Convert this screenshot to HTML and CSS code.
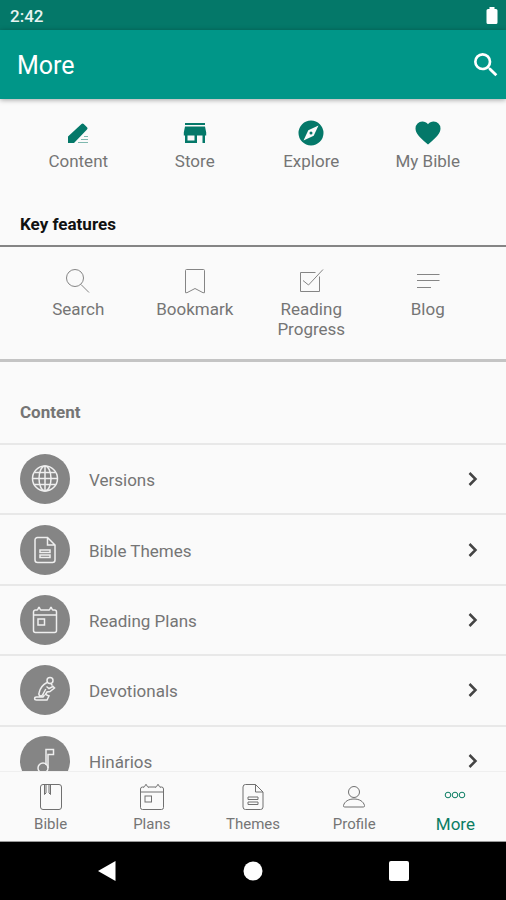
FILE: index.html
```html
<!DOCTYPE html>
<html lang="en">
<head>
<meta charset="utf-8">
<meta name="viewport" content="width=device-width, initial-scale=1">
<title>More</title>
<link rel="stylesheet" href="styles.css">
</head>
<body>
<svg class="defs" aria-hidden="true">
  <symbol id="calendar" viewBox="0 0 26 28">
    <path d="M5 4H3.500a2 2 0 0 0-2 2v18.500a2 2 0 0 0 2 2h19a2 2 0 0 0 2-2V6a2 2 0 0 0-2-2H21M9 4h8M1.500 9h23M4.500 4.500l1.200-1 1-2h.6l1 2 1.200 1M16.500 4.500l1.200-1 1-2h.6l1 2 1.200 1"/>
    <rect x="6" y="13" width="6.500" height="6"/>
  </symbol>
  <symbol id="document" viewBox="0 0 26 28">
    <path d="M15.500 1.500h-10a2.500 2.500 0 0 0-2.500 2.500v20a2.500 2.500 0 0 0 2.500 2.500h15a2.500 2.500 0 0 0 2.500-2.500V9zM15.500 1.500V9H23"/>
    <path d="M8 14h10v2.500H8zM8 19h10v2.500H8z"/>
  </symbol>
  <symbol id="chevron" viewBox="0 0 12 16">
    <path d="M2.500 2l6 6-6 6"/>
  </symbol>
</svg>
<div class="screen">
  <div class="status">
    <span>2:42</span>
    <svg class="battery" viewBox="0 0 12 18"><path d="M3.500 0h5v2H10a1.500 1.500 0 0 1 1.500 1.500v12A1.500 1.500 0 0 1 10 17H2a1.500 1.500 0 0 1-1.500-1.500v-12A1.500 1.500 0 0 1 2 2h1.500z"/></svg>
  </div>
  <header class="appbar">
    <h1>More</h1>
    <button type="button" class="find" aria-label="Search">
      <svg viewBox="3 3 18 18"><path d="M15.500 14h-.79l-.28-.27A6.470 6.470 0 0 0 16 9.500 6.500 6.500 0 1 0 9.500 16c1.610 0 3.090-.59 4.230-1.570l.27.28v.79l5 4.990L20.490 19zm-6 0a4.500 4.500 0 1 1 0-9 4.500 4.500 0 0 1 0 9z"/></svg>
    </button>
  </header>
  <main class="content">
    <nav class="tiles shortcuts">
      <a href="#content"><svg viewBox="0 0 28 28"><path d="M4 24v-6.500L17.500 5a1.500 1.500 0 0 1 2.200 0l3.300 3.300a1.500 1.500 0 0 1 0 2.200L10 24z"/><path class="hair" d="M14 23.500h10M17 20.500h7M20 17.500h4"/></svg>Content</a>
      <a href="#store"><svg viewBox="0 0 28 28"><path fill-rule="evenodd" d="M4 4h20v2H4zM4 7.500h20l1.200 6v3H24V24h-2.500v-7.500H16V24H4v-7.500H2.800v-3zM6.500 16.500v5h7v-5z"/></svg>Store</a>
      <a href="#explore"><svg viewBox="0 0 28 28"><path fill-rule="evenodd" d="M14 1.500a12.500 12.500 0 1 0 0 25 12.500 12.500 0 0 0 0-25zM6.500 21.500l4.800-10.200 10.200-4.800-4.800 10.200zM14 12.500a1.500 1.500 0 1 1 0 3 1.500 1.500 0 0 1 0-3z"/></svg>Explore</a>
      <a href="#my-bible"><svg viewBox="0 0 28 28"><path d="M14 25.500l-1.800-1.600C5.800 18.100 1.500 14.200 1.500 9.400A6.800 6.800 0 0 1 8.400 2.600c2.200 0 4.300 1 5.600 2.600 1.300-1.600 3.400-2.600 5.600-2.600a6.800 6.800 0 0 1 6.900 6.800c0 4.800-4.300 8.700-10.700 14.500z"/></svg>My Bible</a>
    </nav>
    <section class="features">
      <h2>Key features</h2>
      <nav class="tiles outlined">
        <a href="#search"><svg viewBox="0 0 28 28"><circle cx="11" cy="11" r="8.500"/><path d="M17 17.500l8 8"/></svg>Search</a>
        <a href="#bookmark"><svg viewBox="0 0 28 28"><path d="M4.500 3.500q0-1 1-1h17q1 0 1 1v22.200h-1.500L14 21.500l-8 4.200H4.500z"/></svg>Bookmark</a>
        <a href="#progress"><svg viewBox="0 0 28 28"><path d="M18.500 5.500H3.500v19h19V9.500M6 13.500l5.500 4.500L26 2.500"/></svg>Reading Progress</a>
        <a href="#blog"><svg viewBox="0 0 28 28"><path d="M3 7.500h22.500M3 13.500h22.500M3 20.500h14"/></svg>Blog</a>
      </nav>
    </section>
    <section class="library">
      <h2>Content</h2>
      <ul>
        <li><a href="#versions"><span class="disc"><svg viewBox="0 0 28 28"><circle cx="14" cy="13.500" r="12.500"/><ellipse cx="14" cy="13.500" rx="6" ry="12.500"/><path d="M14 1v25M1.500 13.500h25M3.500 7.500h21M3.500 19.500h21"/></svg></span><span class="name">Versions</span><svg class="go"><use href="#chevron"/></svg></a></li>
        <li><a href="#themes"><span class="disc"><svg><use href="#document"/></svg></span><span class="name">Bible Themes</span><svg class="go"><use href="#chevron"/></svg></a></li>
        <li><a href="#plans"><span class="disc"><svg><use href="#calendar"/></svg></span><span class="name">Reading Plans</span><svg class="go"><use href="#chevron"/></svg></a></li>
        <li><a href="#devotionals"><span class="disc"><svg viewBox="0 0 28 28"><circle cx="19" cy="4.500" r="3"/><path d="M16 6.500c-4 2-7 6-8 10.500-.8 3 2.500 4 3.800 1.500l3-5.500M15.500 10.500l2.500 2 4-2 1.500 1.500-4.500 3.500-3 .500-1.500 2.500 3.500 1.500-2 4H5.500c-2.500 0-2.500-3 0-3h6.500l1.500-2M20 8l1.500 1.500"/></svg></span><span class="name">Devotionals</span><svg class="go"><use href="#chevron"/></svg></a></li>
        <li><a href="#hinarios"><span class="disc"><svg viewBox="0 0 28 28"><path d="M15 18V2.500h7.500V7.500H17V21"/><circle cx="12" cy="21" r="5"/></svg></span><span class="name">Hinários</span><svg class="go"><use href="#chevron"/></svg></a></li>
      </ul>
    </section>
  </main>
  <nav class="tabs">
    <a href="#bible"><svg viewBox="0 0 26 28"><rect x="2.500" y="1.500" width="21" height="25" rx="2.500"/><path d="M6.500 1.500V11.500l1.500-1.500V1.500M12.500 1.500V11.500L11 10V1.500"/></svg>Bible</a>
    <a href="#plans"><svg><use href="#calendar"/></svg>Plans</a>
    <a href="#themes"><svg><use href="#document"/></svg>Themes</a>
    <a href="#profile"><svg viewBox="0 0 26 28"><circle cx="13" cy="9" r="5.500"/><path d="M2.500 22.500c1-4 5-6.500 10.500-6.500s9.500 2.500 10.500 6.500q.3 1.500-1.200 1.500H3.700q-1.500 0-1.200-1.500z"/></svg>Profile</a>
    <a href="#more" class="active" aria-current="page"><svg viewBox="0 0 26 28"><circle cx="6" cy="12" r="2.800"/><circle cx="13" cy="12" r="2.800"/><circle cx="20" cy="12" r="2.800"/></svg>More</a>
  </nav>
  <div class="system">
    <button type="button" aria-label="Back"><svg viewBox="0 0 22 22"><path d="M2 11L19.500 1v20z"/></svg></button>
    <button type="button" aria-label="Home"><svg viewBox="0 0 22 22"><circle cx="11" cy="11" r="9.500"/></svg></button>
    <button type="button" aria-label="Overview"><svg viewBox="0 0 22 22"><rect x="1" y="1" width="20" height="20" rx="2"/></svg></button>
  </div>
</div>
</body>
</html>
```
FILE: styles.css
```css
* { box-sizing: border-box; }

body {
  margin: 0;
  background: #fafafa;
  color: #757575;
  font: 17px/20px Roboto, sans-serif;
}

h1, h2, ul { margin: 0; padding: 0; }
a { color: inherit; text-decoration: none; }
button { border: 0; padding: 0; background: none; }
svg { display: block; }
.defs { position: absolute; width: 0; height: 0; }

.screen {
  display: flex;
  flex-direction: column;
  height: 100vh;
}

.status {
  display: flex;
  justify-content: space-between;
  align-items: center;
  flex: none;
  height: 30px;
  padding: 2px 8px 0 10px;
  background: #047869;
  color: #e8f4f2;
  font-weight: 500;
}
.battery { width: 12px; height: 18px; fill: #fff; }

.appbar {
  display: flex;
  justify-content: space-between;
  align-items: center;
  flex: none;
  height: 69px;
  padding: 0 8px 0 17px;
  background: #009688;
  color: #fff;
  box-shadow: 0 1px 5px rgba(0, 0, 0, 0.35);
  z-index: 1;
}
.appbar h1 { font-size: 25px; line-height: 32px; font-weight: 400; padding-top: 2px; }
.find svg { width: 24px; height: 24px; fill: #fff; }

.content {
  flex: 1;
  min-height: 0;
  overflow: hidden;
}

.tiles {
  display: grid;
  grid-template-columns: repeat(4, 1fr);
  padding: 20px 20px 0;
}
.tiles a {
  display: flex;
  flex-direction: column;
  align-items: center;
  gap: 4px;
  padding: 0 16px;
  text-align: center;
}
.tiles svg { width: 28px; height: 28px; }
.shortcuts svg { fill: #047869; }
.shortcuts svg .hair { stroke: #7fb8af; fill: none; }
.outlined svg { fill: none; stroke: #858585; }

h2 { font-size: 17px; line-height: 20px; font-weight: 700; }

.features {
  margin-top: 43px;
  border-bottom: 3px solid #c4c4c4;
}
.features h2 {
  padding: 0 20px 11px;
  border-bottom: 2px solid #858585;
  color: #111;
}
.features .tiles { padding-bottom: 20px; }

.library h2 { padding: 40px 20px 21px; color: #757575; }
.library ul {
  display: grid;
  grid-auto-rows: 1fr;
  height: 352px;
  list-style: none;
}
.library li { border-top: 2px solid #e8e8e8; }
.library a {
  display: flex;
  align-items: center;
  height: 100%;
  padding: 0 27px 0 20px;
}
.disc {
  display: grid;
  place-items: center;
  width: 50px;
  height: 50px;
  border-radius: 50%;
  background: #858585;
}
.disc svg { width: 28px; height: 28px; fill: none; stroke: #efefef; stroke-width: 1.5; }
.name { flex: 1; padding: 2px 0 0 19px; }
.go { width: 12px; height: 16px; fill: none; stroke: #444; stroke-width: 2.5; }

.tabs {
  display: grid;
  grid-template-columns: repeat(5, 1fr);
  flex: none;
  height: 71px;
  padding-top: 11px;
  border-top: 1px solid #efefef;
  border-bottom: 1px solid #999;
  font-size: 15px;
}
.tabs a {
  display: flex;
  flex-direction: column;
  align-items: center;
  gap: 3px;
}
.tabs svg { width: 26px; height: 28px; fill: none; stroke: #707070; }
.tabs .active { color: #0b7d63; font-size: 17px; }
.tabs .active svg { stroke: #0b7d63; }

.system {
  display: flex;
  justify-content: center;
  align-items: center;
  gap: 22px;
  flex: none;
  height: 58px;
  background: #000;
}
.system button { width: 124px; flex: none; display: grid; place-items: center; }
.system svg { width: 22px; height: 22px; fill: #fff; }
```
